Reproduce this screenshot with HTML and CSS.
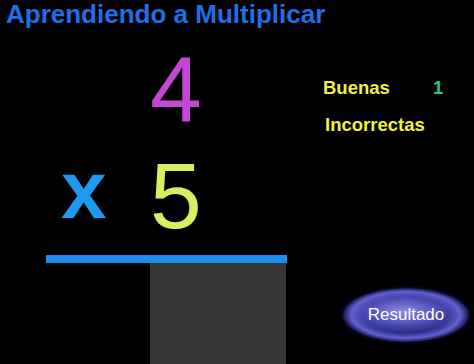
FILE: index.html
```html
<!DOCTYPE html>
<html lang="es">
<head>
<meta charset="utf-8">
<title>Aprendiendo a Multiplicar</title>
<link rel="stylesheet" href="styles.css">
</head>
<body>
<div class="page">
  <h1 class="title">Aprendiendo a Multiplicar</h1>
  <div class="main">
    <div class="problem">
      <div class="row">
        <span class="op"></span>
        <span class="num num-a">4</span>
      </div>
      <div class="row row-b">
        <span class="op">x</span>
        <span class="num num-b">5</span>
      </div>
      <div class="bar"></div>
      <div class="answer-row">
        <div class="answer"></div>
      </div>
    </div>
    <div class="side">
      <div class="score">
        <span class="label">Buenas</span>
        <span class="value">1</span>
        <span class="label label-i">Incorrectas</span>
        <span class="value"></span>
      </div>
      <button class="result-btn" type="button">Resultado</button>
    </div>
  </div>
</div>
</body>
</html>
```
FILE: styles.css
```css
html, body {
  margin: 0;
  padding: 0;
  background: #000;
}
.page {
  width: 474px;
  height: 364px;
  overflow: hidden;
  background: #000;
  font-family: "Liberation Sans", Arial, sans-serif;
}
.title {
  margin: 0;
  padding: 0 0 2px 6px;
  font-size: 26px;
  line-height: 29px;
  font-weight: bold;
  color: #1f6fe8;
  white-space: nowrap;
}
.main {
  display: flex;
  align-items: flex-start;
}
.problem {
  margin-left: 46px;
  width: 241px;
  display: flex;
  flex-direction: column;
}
.row {
  display: grid;
  grid-template-columns: 104px 137px;
  height: 93px;
}
.row:first-child {
  margin-top: 12px;
}
.row-b {
  margin-top: 14px;
}
.op {
  font-size: 82px;
  font-weight: bold;
  line-height: 80px;
  color: #1e9af0;
  padding-left: 15px;
}
.num {
  font-size: 93px;
  line-height: 93px;
}
.num-a {
  color: #c447d6;
}
.num-b {
  color: #d4f060;
}
.bar {
  margin-top: 12px;
  height: 8px;
  background: #1a8ff0;
}
.answer-row {
  display: flex;
}
.answer {
  margin-left: 104px;
  width: 136px;
  height: 110px;
  background: #363636;
}
.side {
  margin-left: 36px;
  margin-top: 38px;
  display: flex;
  flex-direction: column;
  align-items: flex-start;
}
.score {
  display: grid;
  grid-template-columns: 110px 30px;
  font-size: 18.5px;
  line-height: 37px;
  font-weight: bold;
}
.label {
  color: #f0f040;
}
.label-i {
  padding-left: 2px;
}
.value {
  color: #20c890;
}
.result-btn {
  margin-top: 145px;
  margin-left: 20px;
  width: 126px;
  height: 54px;
  border: none;
  border-radius: 50%;
  padding: 0;
  font-family: "Liberation Sans", Arial, sans-serif;
  font-size: 17px;
  color: #fff;
  background:
    radial-gradient(ellipse 58% 50% at 48% 44%, rgba(150,150,235,0.95) 0%, rgba(95,95,205,0.75) 45%, rgba(40,40,120,0) 80%),
    radial-gradient(ellipse 50% 50% at 50% 50%, #1c1c64 0%, #2a2a84 66%, #6262d4 86%, #16164a 100%);
  box-shadow: 0 0 3px 1px #0e0e3a;
}
```
